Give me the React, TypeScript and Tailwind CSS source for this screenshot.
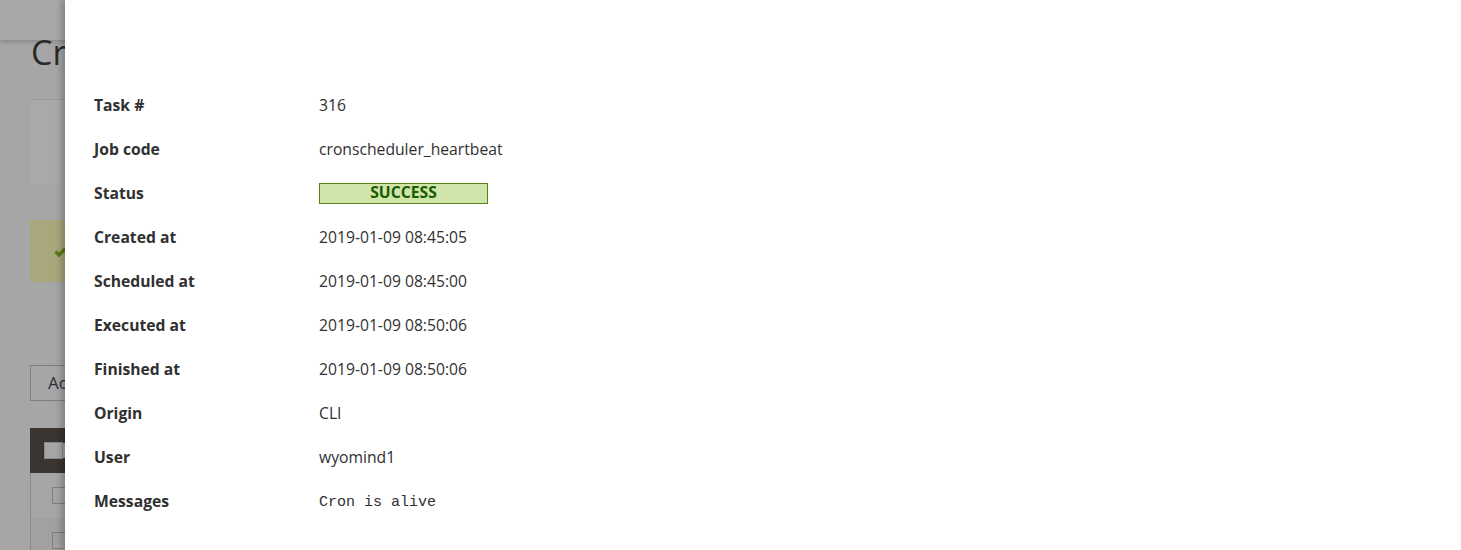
import React from "react";

const rows: { label: string; value: React.ReactNode }[] = [
  { label: "Task #", value: "316" },
  { label: "Job code", value: "cronscheduler_heartbeat" },
  {
    label: "Status",
    value: (
      <span className="-mt-[2px] flex h-[21px] w-[169px] items-center justify-center border border-[#5b8116] bg-[#d0e5a9] text-[15.7px] font-bold uppercase leading-none text-[#185b00]">
        Success
      </span>
    ),
  },
  { label: "Created at", value: "2019-01-09 08:45:05" },
  { label: "Scheduled at", value: "2019-01-09 08:45:00" },
  { label: "Executed at", value: "2019-01-09 08:50:06" },
  { label: "Finished at", value: "2019-01-09 08:50:06" },
  { label: "Origin", value: "CLI" },
  { label: "User", value: "wyomind1" },
  {
    label: "Messages",
    value: (
      <span className="font-['Liberation_Mono',monospace] text-[15px] text-[#303030]">Cron is alive</span>
    ),
  },
];

export default function App() {
  return (
    <div className="relative h-[550px] w-[1461px] overflow-hidden bg-[#a6a6a6] font-['Open_Sans',sans-serif]">
      {/* Underlying page (dimmed) */}
      <div className="flex flex-col">
        <div className="h-[40px] bg-[#a8a8a8] shadow-[0_2px_4px_rgba(0,0,0,0.18)]" />
        <div className="flex flex-col pl-[30px]">
          <div className="-mt-[14px] mb-[10px] h-[63px] pl-[1px] text-[34px] font-normal leading-[52px] text-[#2b2a28]">
            Cron Scheduler
          </div>
          <div className="h-[86px] border-t border-[#9c9c9c] bg-[#a9a9a9]" />
          <div className="mt-[35px] flex h-[62px] items-center bg-[#a9a77c] pl-[24px]">
            <svg width="13" height="12" viewBox="0 0 13 12" className="mt-[2px]">
              <path d="M1.5 5.5 L5 9 L11.5 2.5" fill="none" stroke="#5a7b14" strokeWidth="3.4" />
            </svg>
          </div>
          <div className="mt-[83px] flex h-[36px] w-[120px] items-center border border-[#7e7e7e] pl-[17px] text-[17px] text-[#2c2f3a]">
            Actions
          </div>
          <div className="mt-[27px] flex h-[45px] items-center bg-[#3a3531] pl-[13px]">
            <div className="flex h-[19px] w-[30px] border-[2px] border-[#3a3531]">
              <div className="h-full w-[17px] bg-[#a6a6a6] outline outline-1 outline-[#8a8a8a]" />
              <div className="ml-[1px] h-full flex-1 bg-[#a6a6a6]" />
            </div>
          </div>
          <div className="flex h-[45px] items-center border-l border-[#8c8c8c] bg-[#a6a6a6] pl-[21px]">
            <div className="h-[17px] w-[17px] border border-[#7e7e7e]" />
          </div>
          <div className="flex h-[45px] items-center border-l border-[#8c8c8c] bg-[#a1a1a1] pl-[21px]">
            <div className="h-[17px] w-[17px] border border-[#7e7e7e]" />
          </div>
        </div>
      </div>

      {/* Slide-in modal panel */}
      <div className="absolute inset-y-0 left-[65px] right-0 bg-white pl-[29px] pt-[84px] shadow-[-4px_0_6px_rgba(0,0,0,0.22)]">
        <div className="flex flex-col">
          {rows.map((r) => (
            <div key={r.label} className="flex h-[44px] items-center text-[15.7px] text-[#303030]">
              <div className="w-[225px] font-bold text-[#303030]">{r.label}</div>
              <div>{r.value}</div>
            </div>
          ))}
        </div>
      </div>
    </div>
  );
}
